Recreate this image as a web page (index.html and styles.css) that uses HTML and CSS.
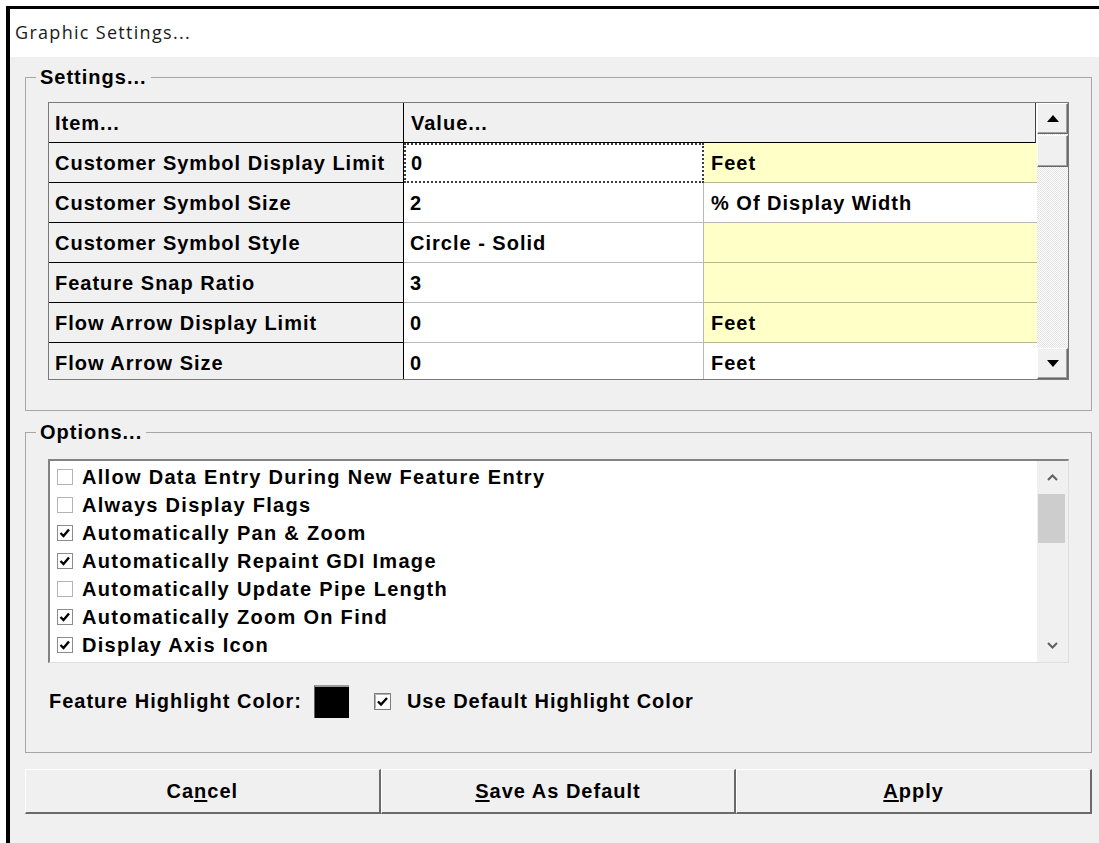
FILE: index.html
```html
<!DOCTYPE html>
<html>
<head>
<meta charset="utf-8">
<title>Graphic Settings</title>
<link rel="stylesheet" href="styles.css">
</head>
<body>
<div class="window">
  <div class="titlebar">Graphic Settings...</div>
  <div class="panel">

    <fieldset class="group settings">
      <legend>Settings...</legend>
      <div class="grid">
        <div class="table">
          <div class="hcell item-h">Item...</div>
          <div class="hcell value-h">Value...</div>

          <div class="cell item">Customer Symbol Display Limit</div>
          <div class="cell value focus">0</div>
          <div class="cell unit note">Feet</div>

          <div class="cell item">Customer Symbol Size</div>
          <div class="cell value">2</div>
          <div class="cell unit">% Of Display Width</div>

          <div class="cell item">Customer Symbol Style</div>
          <div class="cell value">Circle - Solid</div>
          <div class="cell unit note"></div>

          <div class="cell item">Feature Snap Ratio</div>
          <div class="cell value">3</div>
          <div class="cell unit note"></div>

          <div class="cell item">Flow Arrow Display Limit</div>
          <div class="cell value">0</div>
          <div class="cell unit note">Feet</div>

          <div class="cell item">Flow Arrow Size</div>
          <div class="cell value">0</div>
          <div class="cell unit">Feet</div>
        </div>
        <div class="vscroll">
          <div class="sbtn"><svg width="12" height="7" viewBox="0 0 12 7"><polygon points="6,0 12,7 0,7" fill="#000"/></svg></div>
          <div class="sthumb"></div>
          <div class="strack"></div>
          <div class="sbtn"><svg width="12" height="7" viewBox="0 0 12 7"><polygon points="0,0 12,0 6,7" fill="#000"/></svg></div>
        </div>
      </div>
    </fieldset>

    <fieldset class="group options">
      <legend>Options...</legend>
      <div class="listbox">
        <ul class="items">
          <li><svg class="chk" width="16" height="16" viewBox="0 0 16 16"><rect x="0.5" y="0.5" width="15" height="15" fill="#fff" stroke="#b4b4b4"/></svg>Allow Data Entry During New Feature Entry</li>
          <li><svg class="chk" width="16" height="16" viewBox="0 0 16 16"><rect x="0.5" y="0.5" width="15" height="15" fill="#fff" stroke="#b4b4b4"/></svg>Always Display Flags</li>
          <li><svg class="chk" width="16" height="16" viewBox="0 0 16 16"><rect x="0.5" y="0.5" width="15" height="15" fill="#fff" stroke="#8c8c8c"/><path d="M3.5 8 L6.5 11 L12 4.5" fill="none" stroke="#000" stroke-width="2.4"/></svg>Automatically Pan &amp; Zoom</li>
          <li><svg class="chk" width="16" height="16" viewBox="0 0 16 16"><rect x="0.5" y="0.5" width="15" height="15" fill="#fff" stroke="#8c8c8c"/><path d="M3.5 8 L6.5 11 L12 4.5" fill="none" stroke="#000" stroke-width="2.4"/></svg>Automatically Repaint GDI Image</li>
          <li><svg class="chk" width="16" height="16" viewBox="0 0 16 16"><rect x="0.5" y="0.5" width="15" height="15" fill="#fff" stroke="#b4b4b4"/></svg>Automatically Update Pipe Length</li>
          <li><svg class="chk" width="16" height="16" viewBox="0 0 16 16"><rect x="0.5" y="0.5" width="15" height="15" fill="#fff" stroke="#8c8c8c"/><path d="M3.5 8 L6.5 11 L12 4.5" fill="none" stroke="#000" stroke-width="2.4"/></svg>Automatically Zoom On Find</li>
          <li><svg class="chk" width="16" height="16" viewBox="0 0 16 16"><rect x="0.5" y="0.5" width="15" height="15" fill="#fff" stroke="#8c8c8c"/><path d="M3.5 8 L6.5 11 L12 4.5" fill="none" stroke="#000" stroke-width="2.4"/></svg>Display Axis Icon</li>
        </ul>
        <div class="mscroll">
          <div class="marrow"><svg width="11" height="7" viewBox="0 0 11 7"><path d="M1 6 L5.5 1.5 L10 6" fill="none" stroke="#606060" stroke-width="2"/></svg></div>
          <div class="mthumb"></div>
          <div class="mtrack"></div>
          <div class="marrow"><svg width="11" height="7" viewBox="0 0 11 7"><path d="M1 1 L5.5 5.5 L10 1" fill="none" stroke="#606060" stroke-width="2"/></svg></div>
        </div>
      </div>
      <div class="highlight-row">
        <span class="label">Feature Highlight Color:</span>
        <span class="swatch"></span>
        <svg class="classic-chk" width="17" height="17" viewBox="0 0 17 17"><rect x="0.5" y="0.5" width="16" height="16" fill="#fff" stroke="#7c7c7c"/><path d="M1.5 15.5 V1.5 H15.5" fill="none" stroke="#b0b0b0"/><path d="M4 8.5 L7 11.5 L13 5" fill="none" stroke="#000" stroke-width="2.4"/></svg>
        <span class="label">Use Default Highlight Color</span>
      </div>
    </fieldset>

    <div class="buttons">
      <button class="btn">Ca<u>n</u>cel</button>
      <button class="btn"><u>S</u>ave As Default</button>
      <button class="btn"><u>A</u>pply</button>
    </div>

  </div>
</div>
</body>
</html>
```
FILE: styles.css
```css
html, body {
  margin: 0;
  padding: 0;
  background: #fff;
}

body {
  height: 843px;
  overflow: hidden;
}

.window {
  margin: 6px 0 0 6px;
  border-top: 3px solid #000;
  border-left: 4px solid #000;
  height: 834px;
  display: flex;
  flex-direction: column;
}

.titlebar {
  height: 48px;
  box-sizing: border-box;
  padding: 11px 0 0 5px;
  background: #fff;
  font: 18px/24px "Open Sans", "Noto Sans", sans-serif;
  letter-spacing: 1.3px;
  color: #1a1a1a;
}

.panel {
  flex: 1;
  background: #f0f0f0;
  padding: 8px 7px 0 15px;
  font: bold 20px/24px "Liberation Sans", Arial, sans-serif;
  letter-spacing: 1px;
  color: #000;
}

/* group boxes */
.group {
  margin: 0;
  min-width: 0;
  border: 1px solid #a6a6a6;
  padding: 13px 22px 30px 22px;
}

.group legend {
  padding: 0 4px;
  margin-left: -12px;
  font: inherit;
  line-height: 24px;
}

.options {
  margin-top: 9px;
  padding-top: 15px;
  padding-bottom: 35px;
}

/* property grid */
.grid {
  display: flex;
  height: 278px;
  box-sizing: border-box;
  border: 1px solid #7a7a7a;
  background: #fff;
}

.table {
  display: grid;
  grid-template-columns: 355px 300px 333px;
  grid-auto-rows: 40px;
  overflow: hidden;
  height: 276px;
}

.hcell, .cell {
  box-sizing: border-box;
  display: flex;
  align-items: center;
  white-space: nowrap;
}

.hcell {
  background: #f0f0f0;
  border-bottom: 1px solid #000;
}

.item-h {
  padding-left: 6px;
  border-right: 1px solid #000;
}

.value-h {
  grid-column: span 2;
  padding-left: 7px;
  border-right: 1px solid #404040;
  margin-right: 1px;
}

.cell.item {
  background: #f0f0f0;
  padding-left: 6px;
  border-right: 1px solid #000;
  border-bottom: 1px solid #000;
}

.cell.value {
  padding-left: 6px;
  border-right: 1px solid #b8b8b8;
  border-bottom: 1px solid #b8b8b8;
}

.cell.value.focus {
  border: 2px dotted #3c3c3c;
  padding-left: 5px;
}

.cell.unit {
  padding-left: 7px;
  border-bottom: 1px solid rgba(0, 0, 0, 0.28);
}

.cell.note {
  background: #ffffc8;
}

/* classic scrollbar of the grid */
.vscroll {
  width: 31px;
  display: flex;
  flex-direction: column;
  background: repeating-conic-gradient(#ffffff 0 25%, #e2e2e2 0 50%) 0 0 / 2px 2px;
}

.sbtn, .sthumb {
  box-sizing: border-box;
  background: #f0f0f0;
  border: 1px solid;
  border-color: #ffffff #696969 #696969 #ffffff;
  box-shadow: inset -1px -1px 0 #a0a0a0;
}

.sbtn {
  height: 31px;
  display: flex;
  align-items: center;
  justify-content: center;
}

.sthumb {
  height: 32px;
  margin-top: 1px;
}

.strack {
  flex: 1;
}

/* option list */
.listbox {
  display: flex;
  height: 204px;
  box-sizing: border-box;
  border-top: 2px solid #828282;
  border-left: 2px solid #828282;
  border-right: 1px solid #dedede;
  border-bottom: 1px solid #dedede;
  background: #fff;
}

.items {
  flex: 1;
  list-style: none;
  margin: 0;
  padding: 2px 0 0 7px;
  letter-spacing: 1.3px;
}

.items li {
  height: 28px;
  display: flex;
  align-items: center;
  white-space: nowrap;
}

.chk {
  flex: none;
  margin-right: 9px;
}

.mscroll {
  width: 31px;
  display: flex;
  flex-direction: column;
  align-items: center;
  background: #f0f0f0;
}

.marrow {
  height: 33px;
  display: flex;
  align-items: center;
  justify-content: center;
}

.mthumb {
  width: 27px;
  height: 49px;
  background: #cdcdcd;
  margin-left: -2px;
}

.mtrack {
  flex: 1;
}

/* highlight colour row */
.highlight-row {
  display: flex;
  align-items: center;
  height: 32px;
  margin-top: 22px;
  padding-left: 1px;
}

.swatch {
  width: 35px;
  height: 33px;
  box-sizing: border-box;
  background: #000;
  border-top: 2px solid #9a9a9a;
  border-left: 1px solid #606060;
  margin-left: 12px;
}

.classic-chk {
  flex: none;
  margin-left: 25px;
  margin-right: 16px;
}

/* dialog buttons */
.buttons {
  display: grid;
  grid-template-columns: repeat(3, 1fr);
  margin-top: 16px;
}

.btn {
  height: 45px;
  margin: 0;
  padding: 0;
  background: #f0f0f0;
  border: 1px solid;
  border-color: #ffffff #6a6a6a #6a6a6a #ffffff;
  border-width: 1px 2px 2px 1px;
  font: inherit;
  letter-spacing: 1px;
  color: #000;
}

.btn u {
  text-decoration-thickness: 2px;
  text-underline-offset: 2px;
}
```
